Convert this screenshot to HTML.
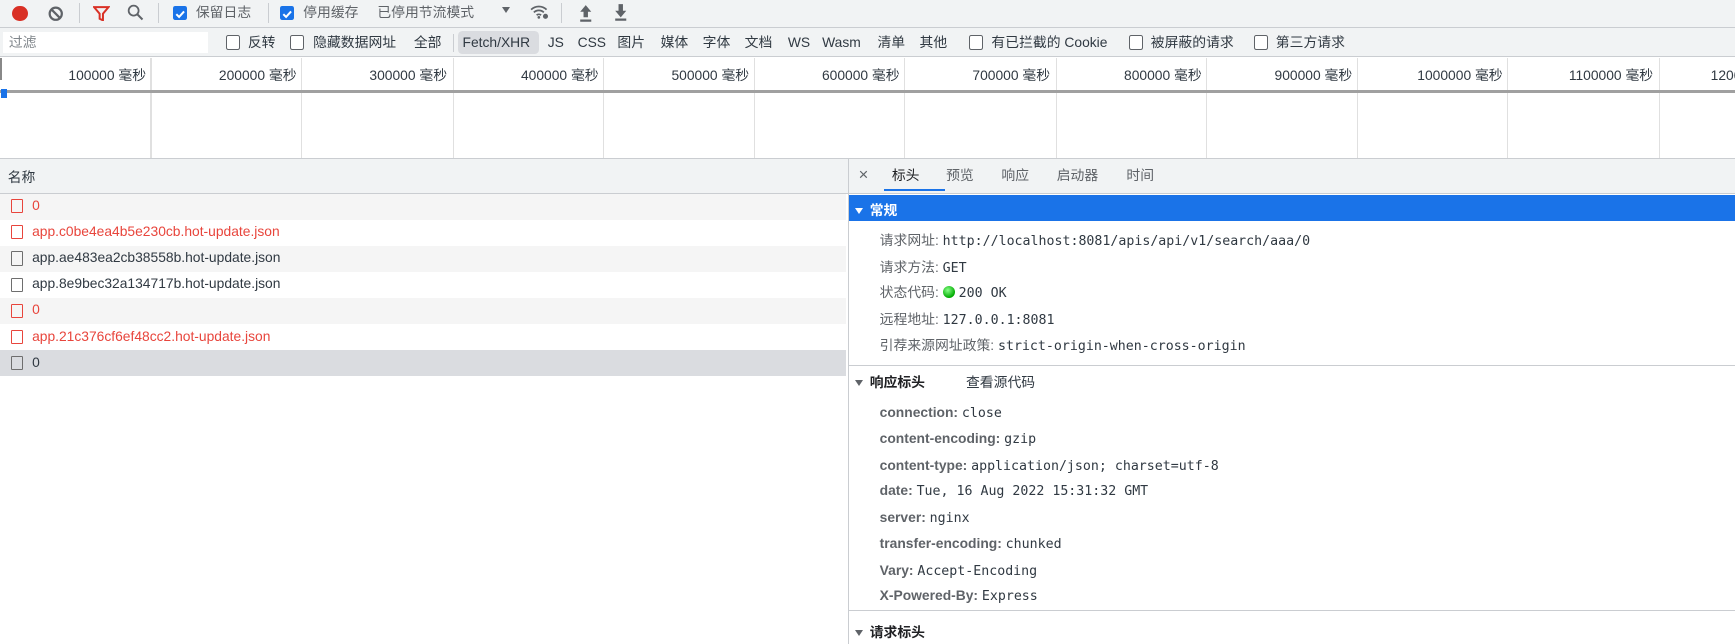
<!DOCTYPE html>
<html><head><meta charset="utf-8"><style>
html,body{margin:0;padding:0;overflow:hidden;background:#fff}
#root{zoom:1.10651;width:1568px;height:582px;position:relative;overflow:hidden;font-family:"Liberation Sans","Noto Sans CJK SC",sans-serif;font-size:12.5px;line-height:20px;color:#303942}
.a{position:absolute;white-space:nowrap;line-height:20px}
.cb{position:absolute;width:11px;height:11px;border:1px solid #5f6368;border-radius:2px;background:#fff}
.cbc{position:absolute;width:13px;height:13px;border-radius:2px;background:#1a73e8}
.sep{position:absolute;width:1px;background:#cacdd1}
.mono{font-family:"DejaVu Sans Mono","Liberation Mono",monospace;font-size:12px}
.row{position:absolute;left:0;width:765px;height:23.6px}
.doc{position:absolute;left:10px;top:5px;width:9px;height:11px;border:1px solid #6e6e6e;border-radius:1px}
.red .doc{border-color:#e8453c}
.red span{color:#e8453c}
.row span{position:absolute;left:29px;top:3px;line-height:16px}
.k{font-weight:bold;color:#5f6368}
.tri{position:absolute;width:0;height:0;border-left:4px solid transparent;border-right:4px solid transparent;border-top:6px solid #5f6368}
</style></head><body><div id="root">
<!-- toolbar -->
<div class="a" style="left:0;top:0;width:1568px;height:24px;background:#f1f3f4;border-bottom:1px solid #cacdd1"></div>
<div class="a" style="left:11px;top:5px;width:14px;height:14px;border-radius:50%;background:#d93025"></div>
<svg class="a" style="left:43px;top:5px" width="14" height="14" viewBox="0 0 14 14"><circle cx="7" cy="7" r="5.5" fill="none" stroke="#5f6368" stroke-width="2"/><line x1="3" y1="3" x2="11" y2="11" stroke="#5f6368" stroke-width="2"/></svg>
<div class="sep" style="left:71px;top:3px;height:18px"></div>
<svg class="a" style="left:84px;top:5px" width="15" height="14" viewBox="0 0 15 14"><path d="M1 1h13l-5 6v6l-3-1.5V7z" fill="none" stroke="#d93025" stroke-width="1.8"/></svg>
<svg class="a" style="left:115px;top:4px" width="15" height="15" viewBox="0 0 15 15"><circle cx="6" cy="6" r="4.5" fill="none" stroke="#5f6368" stroke-width="1.6"/><line x1="9.5" y1="9.5" x2="14" y2="14" stroke="#5f6368" stroke-width="1.8"/></svg>
<div class="sep" style="left:143px;top:3px;height:18px"></div>
<div class="cbc" style="left:156px;top:5px"><svg width="13" height="13"><path d="M3 6.5l2.5 2.5 4.5-5" stroke="#fff" stroke-width="1.8" fill="none"/></svg></div>
<div class="a" style="left:177px;top:1px;color:#5f6368">保留日志</div>
<div class="sep" style="left:242px;top:3px;height:18px"></div>
<div class="cbc" style="left:253px;top:5px"><svg width="13" height="13"><path d="M3 6.5l2.5 2.5 4.5-5" stroke="#fff" stroke-width="1.8" fill="none"/></svg></div>
<div class="a" style="left:274px;top:1px;color:#5f6368">停用缓存</div>
<div class="a" style="left:341px;top:1px;color:#5f6368">已停用节流模式</div>
<div class="tri" style="left:454px;top:6px"></div>
<svg class="a" style="left:479px;top:3px" width="18" height="16" viewBox="0 0 18 16"><path d="M1 6a10 10 0 0 1 14 0M3.5 8.5a6.5 6.5 0 0 1 9 0M6 11a3 3 0 0 1 4 0" fill="none" stroke="#5f6368" stroke-width="1.6"/><circle cx="8" cy="13" r="1.2" fill="#5f6368"/><circle cx="14" cy="12" r="2.3" fill="#5f6368"/></svg>
<div class="sep" style="left:507px;top:3px;height:18px"></div>
<svg class="a" style="left:522px;top:4px" width="14" height="16" viewBox="0 0 14 16"><path d="M7 1l5 6H9v5H5V7H2z M2 14h10v2H2z" fill="#5f6368"/></svg>
<svg class="a" style="left:554px;top:3px" width="14" height="16" viewBox="0 0 14 16"><path d="M5 1h4v6h3l-5 6-5-6h3z M2 14h10v2H2z" fill="#5f6368"/></svg>
<!-- filter row -->
<div class="a" style="left:0;top:25px;width:1568px;height:26px;background:#f1f3f4;border-bottom:1px solid #cacdd1"></div>
<div class="a" style="left:3px;top:29px;width:185px;height:19px;background:#fff"></div>
<div class="a" style="left:8px;top:28px;color:#80868b">过滤</div>
<div class="cb" style="left:204px;top:32px"></div><div class="a" style="left:224px;top:28px">反转</div>
<div class="cb" style="left:262px;top:32px"></div><div class="a" style="left:283px;top:28px">隐藏数据网址</div>
<div class="a" style="left:374px;top:28px">全部</div>
<div class="sep" style="left:409px;top:31px;height:16px"></div>
<div class="a" style="left:414px;top:28px;width:73px;height:21px;border-radius:4px;background:#dadce0"></div>
<div class="a" style="left:418px;top:28px">Fetch/XHR</div>
<div class="a" style="left:495px;top:28px">JS</div>
<div class="a" style="left:522px;top:28px">CSS</div>
<div class="a" style="left:558px;top:28px">图片</div>
<div class="a" style="left:597px;top:28px">媒体</div>
<div class="a" style="left:635px;top:28px">字体</div>
<div class="a" style="left:673px;top:28px">文档</div>
<div class="a" style="left:712px;top:28px">WS</div>
<div class="a" style="left:743px;top:28px">Wasm</div>
<div class="a" style="left:793px;top:28px">清单</div>
<div class="a" style="left:831px;top:28px">其他</div>
<div class="cb" style="left:876px;top:32px"></div><div class="a" style="left:896px;top:28px">有已拦截的 Cookie</div>
<div class="cb" style="left:1020px;top:32px"></div><div class="a" style="left:1040px;top:28px">被屏蔽的请求</div>
<div class="cb" style="left:1133px;top:32px"></div><div class="a" style="left:1153px;top:28px">第三方请求</div>
<!-- timeline -->
<div class="a" style="left:0;top:52px;width:1568px;height:30px;background:#fff"></div>
<div class="a" style="left:0;top:52px;width:2px;height:20px;background:#888"></div>
<div class="a" style="left:0;top:143px;width:1568px;height:1px;background:#cacdd1"></div>
<!-- left pane -->
<div class="a" style="left:0;top:144px;width:766px;height:30px;background:#f1f3f4;border-bottom:1px solid #cacdd1"></div>
<div class="a" style="left:7px;top:150px">名称</div>
<div class="row red" style="top:175px;background:#f5f5f5"><div class="doc"></div><span>0</span></div>
<div class="row red" style="top:198.6px;background:#fff"><div class="doc"></div><span>app.c0be4ea4b5e230cb.hot-update.json</span></div>
<div class="row" style="top:222.2px;background:#f5f5f5"><div class="doc"></div><span>app.ae483ea2cb38558b.hot-update.json</span></div>
<div class="row" style="top:245.8px;background:#fff"><div class="doc"></div><span>app.8e9bec32a134717b.hot-update.json</span></div>
<div class="row red" style="top:269.4px;background:#f5f5f5"><div class="doc"></div><span>0</span></div>
<div class="row red" style="top:293px;background:#fff"><div class="doc"></div><span>app.21c376cf6ef48cc2.hot-update.json</span></div>
<div class="row" style="top:316.6px;background:#dadce0"><div class="doc"></div><span>0</span></div>
<div class="a" style="left:766px;top:144px;width:1px;height:438px;background:#cacdd1"></div>
<!-- right pane -->
<div class="a" style="left:767px;top:144px;width:801px;height:30px;background:#f1f3f4;border-bottom:1px solid #cacdd1"></div>
<div class="a" style="left:776px;top:148px;font-size:15px;color:#5f6368">×</div>
<div class="a" style="left:806px;top:148px;color:#202124">标头</div>
<div class="a" style="left:799px;top:171px;width:55px;height:2px;background:#1a73e8"></div>
<div class="a" style="left:855px;top:148px;color:#5f6368">预览</div>
<div class="a" style="left:905px;top:148px;color:#5f6368">响应</div>
<div class="a" style="left:955px;top:148px;color:#5f6368">启动器</div>
<div class="a" style="left:1018px;top:148px;color:#5f6368">时间</div>
<div class="a" style="left:767px;top:176px;width:801px;height:24px;background:#1a73e8"></div>
<div class="tri" style="left:773px;top:188px;border-top-color:#fff"></div>
<div class="a" style="left:786px;top:180px;color:#fff;font-weight:bold">常规</div>
<div class="a" style="left:795px;top:207px"><span style="color:#5f6368">请求网址: </span><span class="mono">http://localhost:8081/apis/api/v1/search/aaa/0</span></div>
<div class="a" style="left:795px;top:231px"><span style="color:#5f6368">请求方法: </span><span class="mono">GET</span></div>
<div class="a" style="left:795px;top:254px"><span style="color:#5f6368">状态代码: </span><span style="display:inline-block;width:11px;height:11px;border-radius:50%;background:radial-gradient(circle at 40% 35%,#8f8,#0a0 70%);vertical-align:-1px"></span> <span class="mono">200 OK</span></div>
<div class="a" style="left:795px;top:278px"><span style="color:#5f6368">远程地址: </span><span class="mono">127.0.0.1:8081</span></div>
<div class="a" style="left:795px;top:302px"><span style="color:#5f6368">引荐来源网址政策: </span><span class="mono">strict-origin-when-cross-origin</span></div>
<div class="a" style="left:767px;top:330px;width:801px;height:1px;background:#cacdd1"></div>
<div class="tri" style="left:773px;top:343px"></div>
<div class="a" style="left:786px;top:335px;font-weight:bold;color:#202124">响应标头</div>
<div class="a" style="left:873px;top:335px">查看源代码</div>
<div class="a" style="left:795px;top:362px"><span class="k">connection: </span><span class="mono">close</span></div>
<div class="a" style="left:795px;top:386px"><span class="k">content-encoding: </span><span class="mono">gzip</span></div>
<div class="a" style="left:795px;top:410px"><span class="k">content-type: </span><span class="mono">application/json; charset=utf-8</span></div>
<div class="a" style="left:795px;top:433px"><span class="k">date: </span><span class="mono">Tue, 16 Aug 2022 15:31:32 GMT</span></div>
<div class="a" style="left:795px;top:457px"><span class="k">server: </span><span class="mono">nginx</span></div>
<div class="a" style="left:795px;top:481px"><span class="k">transfer-encoding: </span><span class="mono">chunked</span></div>
<div class="a" style="left:795px;top:505px"><span class="k">Vary: </span><span class="mono">Accept-Encoding</span></div>
<div class="a" style="left:795px;top:528px"><span class="k">X-Powered-By: </span><span class="mono">Express</span></div>
<div class="a" style="left:767px;top:551px;width:801px;height:1px;background:#cacdd1"></div>
<div class="tri" style="left:773px;top:569px"></div>
<div class="a" style="left:786px;top:561px;font-weight:bold;color:#202124">请求标头</div>
<!-- timeline columns -->
<div class="sep" style="left:136px;top:52px;height:91px;background:#e0e0e0"></div>
<div class="sep" style="left:272px;top:52px;height:91px;background:#e0e0e0"></div>
<div class="sep" style="left:409px;top:52px;height:91px;background:#e0e0e0"></div>
<div class="sep" style="left:545px;top:52px;height:91px;background:#e0e0e0"></div>
<div class="sep" style="left:681px;top:52px;height:91px;background:#e0e0e0"></div>
<div class="sep" style="left:817px;top:52px;height:91px;background:#e0e0e0"></div>
<div class="sep" style="left:954px;top:52px;height:91px;background:#e0e0e0"></div>
<div class="sep" style="left:1090px;top:52px;height:91px;background:#e0e0e0"></div>
<div class="sep" style="left:1226px;top:52px;height:91px;background:#e0e0e0"></div>
<div class="sep" style="left:1362px;top:52px;height:91px;background:#e0e0e0"></div>
<div class="sep" style="left:1499px;top:52px;height:91px;background:#e0e0e0"></div>
<div class="a" style="left:0;top:81px;width:1568px;height:3px;background:#a0a0a0"></div>
<div class="a" style="left:1px;top:80px;width:5px;height:9px;background:#1a73e8"></div>
<div class="a" style="right:1436px;top:58px">100000 毫秒</div>
<div class="a" style="right:1300px;top:58px">200000 毫秒</div>
<div class="a" style="right:1164px;top:58px">300000 毫秒</div>
<div class="a" style="right:1027px;top:58px">400000 毫秒</div>
<div class="a" style="right:891px;top:58px">500000 毫秒</div>
<div class="a" style="right:755px;top:58px">600000 毫秒</div>
<div class="a" style="right:619px;top:58px">700000 毫秒</div>
<div class="a" style="right:482px;top:58px">800000 毫秒</div>
<div class="a" style="right:346px;top:58px">900000 毫秒</div>
<div class="a" style="right:210px;top:58px">1000000 毫秒</div>
<div class="a" style="right:74px;top:58px">1100000 毫秒</div>
<div class="a" style="left:1546px;top:58px">1200000 毫秒</div>
</div></body></html>
